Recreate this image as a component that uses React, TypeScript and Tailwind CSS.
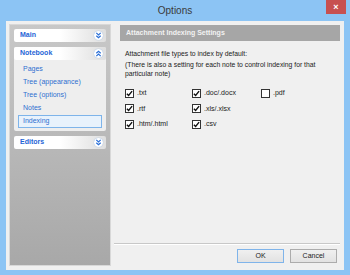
import type { ReactNode } from "react";

function Chevrons({ up }: { up?: boolean }) {
  return (
    <span className="flex h-[9px] w-[9px] items-center justify-center rounded-full bg-white shadow-[0_0_1px_#7aa7e0]">
      <svg width="7" height="7" viewBox="0 0 8 8" className={up ? "rotate-180" : ""}>
        <path d="M1.5 1 L4 3.3 L6.5 1 M1.5 4.2 L4 6.5 L6.5 4.2" stroke="#2a6fd8" strokeWidth="1.4" fill="none" />
      </svg>
    </span>
  );
}

function SectionHeader({ label, up }: { label: string; up?: boolean }) {
  return (
    <div className="flex h-[13px] items-center justify-between rounded-[2px] bg-gradient-to-r from-white via-white to-[#dedede] pl-[6px] pr-[3px]">
      <span className="text-[7px] font-bold text-[#1f64d6]">{label}</span>
      <Chevrons up={up} />
    </div>
  );
}

function Check({ checked, label }: { checked: boolean; label: string }) {
  return (
    <div className="flex items-center gap-[3px]">
      <span className="flex h-[9px] w-[9px] items-center justify-center border border-[#333] bg-white">
        {checked && (
          <svg width="7" height="7" viewBox="0 0 8 8">
            <path d="M1 4.2 L3 6.3 L7 1.3" stroke="#111" strokeWidth="1.6" fill="none" />
          </svg>
        )}
      </span>
      <span className="text-[7px] text-[#222]">{label}</span>
    </div>
  );
}

function Btn({ children, primary }: { children: ReactNode; primary?: boolean }) {
  return (
    <div
      className={
        "flex h-[14px] w-[47px] items-center justify-center border bg-gradient-to-b from-[#f0f0f0] to-[#e2e2e2] text-[7px] text-[#222] " +
        (primary ? "border-[#7fb4ea]" : "border-[#acacac]")
      }
    >
      {children}
    </div>
  );
}

export default function App() {
  const items = ["Pages", "Tree (appearance)", "Tree (options)", "Notes", "Indexing"];

  return (
    <div
      className="flex h-[275px] w-[350px] flex-col bg-[#8cc4f4]"
      style={{ fontFamily: '"Liberation Sans", Arial, sans-serif' }}
    >
      <div className="relative flex h-[21px] items-center justify-center">
        <span className="text-[10px] text-[#3a3a3a]">Options</span>
        <div className="absolute right-[4px] top-0 flex h-[14px] w-[20px] items-center justify-center bg-[#c75050] text-[9px] font-bold leading-none text-white">
          ×
        </div>
      </div>

      <div className="mx-[6px] mb-[5px] flex flex-1 bg-[#f0f0f0] pb-[4px] pl-[3px] pt-[3px]">
        <div className="flex w-[102px] flex-col gap-[5px] border border-[#d8d8d8] bg-gradient-to-b from-[#c8c8c8] to-[#a8a8a8] px-[4px] pt-[4px]">
          <SectionHeader label="Main" />
          <div className="flex flex-col rounded-[2px] bg-[#eeeeee] pb-[3px]">
            <SectionHeader label="Notebook" up />
            <div className="flex flex-col pt-[3px]">
              {items.map((it) => (
                <div
                  key={it}
                  className={
                    "mx-[4px] flex h-[13px] items-center border pl-[4px] text-[7px] text-[#2f6fd0] " +
                    (it === "Indexing" ? "border-[#7eb4ea] bg-[#e8f2fc]" : "border-transparent")
                  }
                >
                  {it}
                </div>
              ))}
            </div>
          </div>
          <SectionHeader label="Editors" />
        </div>

        <div className="flex flex-1 flex-col pr-[4px]">
          <div className="ml-[9px] mt-[1px] flex h-[16px] items-center bg-[#a6a6a6] pl-[6px] text-[7px] font-bold text-[#f2f2f2]">
            Attachment Indexing Settings
          </div>
          <div className="ml-[14px] mt-[9px] flex flex-col text-[6.8px] text-[#222]">
            <div className="leading-[8px]">Attachment file types to index by default:</div>
            <div className="mt-[3px] leading-[8.5px]">
              (There is also a setting for each note to control indexing for that
              <br />
              particular note)
            </div>
          </div>
          <div className="ml-[14px] mt-[10px] grid grid-cols-[67px_69px_60px] gap-y-[5px]">
            <Check checked label=".txt" />
            <Check checked label=".doc/.docx" />
            <Check checked={false} label=".pdf" />
            <Check checked label=".rtf" />
            <Check checked label=".xls/.xlsx" />
            <div />
            <Check checked label=".htm/.html" />
            <Check checked label=".csv" />
          </div>
          <div className="flex-1" />
          <div className="ml-[3px] border-b border-t border-b-white border-t-[#c8c8c8]" />
          <div className="mt-[4px] flex justify-end gap-[6px] pb-[3px] pr-[3px]">
            <Btn primary>OK</Btn>
            <Btn>Cancel</Btn>
          </div>
        </div>
      </div>
    </div>
  );
}
